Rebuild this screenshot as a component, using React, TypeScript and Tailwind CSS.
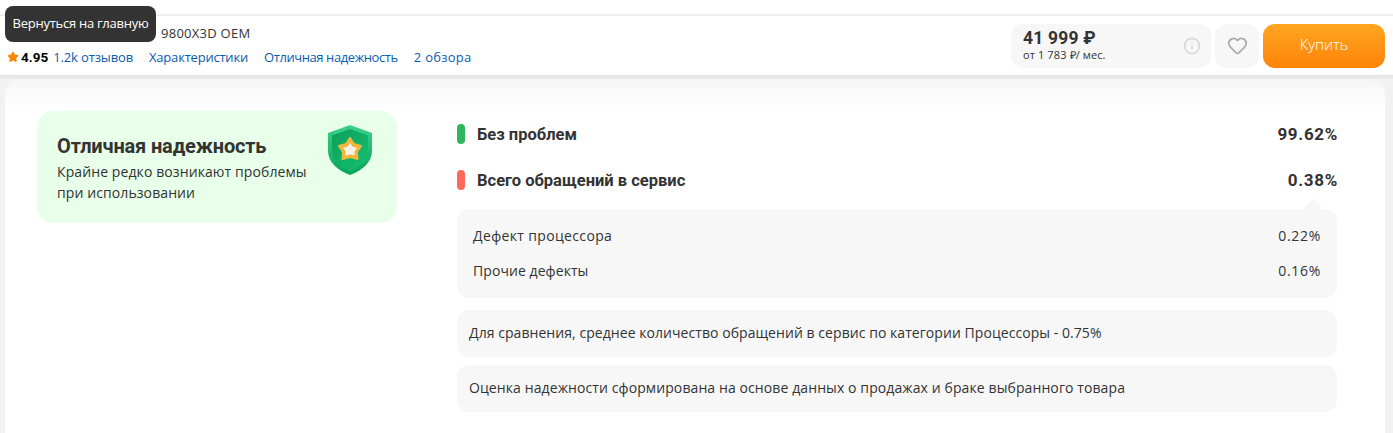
import { Heart, Info, Star } from "lucide-react";

const Shield = () => (
	<svg width="46" height="52" viewBox="0 0 46 52" className="shrink-0">
		<defs>
			<linearGradient id="sh" x1="0" y1="0" x2="0" y2="1">
				<stop offset="0" stopColor="#3fd08a" />
				<stop offset="1" stopColor="#06a35a" />
			</linearGradient>
			<linearGradient id="inner" x1="0" y1="0" x2="1" y2="1">
				<stop offset="0" stopColor="#0c9f5b" />
				<stop offset="1" stopColor="#16c070" />
			</linearGradient>
		</defs>
		<path d="M23 1 L45 9 V27 C45 39 34 47 23 51 C12 47 1 39 1 27 V9 Z" fill="url(#sh)" />
		<path d="M23 5 L41 11.500 V27 C41 37 32 44 23 47.500 C14 44 5 37 5 27 V11.500 Z" fill="url(#inner)" />
		<path d="M23 14 L27 20 L34 22 L30 28 L30.500 35 L23 33 L15.500 35 L16 28 L12 22 L19 20 Z" fill="#eeb73d" stroke="#eeb73d" strokeWidth="2" strokeLinejoin="round" />
		<path d="M23 19 L25.500 22.500 L30 24 L27.500 27.500 L27.500 31.500 L23 30.500 L18.500 31.500 L18.500 27.500 L16 24 L20.500 22.500 Z" fill="#f8f1e4" />
	</svg>
);

const Row = ({ color, label, value }: { color: string; label: string; value: string }) => (
	<div className="flex items-center h-[46px]">
		<span className={`w-2 h-5 rounded-full mr-3 ${color}`} />
		<span className="flex-1 pt-[2px] font-['Roboto',sans-serif] text-[16.5px] font-bold text-[#333]">{label}</span>
		<span className="pt-[2px] -mr-px font-['Roboto',sans-serif] text-[17px] tracking-[0.04em] font-bold text-[#333]">{value}</span>
	</div>
);

const Note = ({ children, tracking }: { children: string; tracking: string }) => (
	<div className={`bg-[#f7f7f7] rounded-xl h-[47px] px-3 pb-[2px] flex items-center text-[14px] text-[#333] ${tracking}`}>{children}</div>
);

export default function App() {
	return (
		<div className="relative h-[433px] overflow-hidden bg-[#f2f2f2] font-['Open_Sans',sans-serif] text-[#333]">
			<div className="h-4 bg-white border-b-2 border-[#eeeeee]" />
			<div className="h-[59px] bg-white flex items-center pl-[6px] pr-[8px]">
				<div className="flex-1 min-w-0 pb-[2px]">
					<div className="pl-[155px] text-[13px] tracking-[0.02em] leading-4 text-[#333]">9800X3D OEM</div>
					<div className="flex items-center mt-[8px] text-[13px] leading-4">
						<Star size={12} className="text-[#fc8507] fill-[#fc8507] ml-px mr-[2px]" />
						<span className="font-['Roboto',sans-serif] text-[13.5px] font-bold text-black mr-[5px]">4.95</span>
						<span className="text-[#0b5cad] tracking-[-0.01em] mr-[16px]">1.2k отзывов</span>
						<span className="text-[#0b5cad] tracking-[-0.016em] mr-[16px]">Характеристики</span>
						<span className="text-[#0b5cad] tracking-[-0.032em] mr-[16px]">Отличная надежность</span>
						<span className="text-[#0b5cad] tracking-[0.02em]">2 обзора</span>
					</div>
				</div>
				<div className="w-[200px] h-11 mr-1 bg-[#f7f7f7] rounded-xl pl-3 pr-[10px] flex items-center">
					<div className="flex-1 -mt-[3px]">
						<div className="font-['Roboto',sans-serif] text-[17.5px] leading-5 font-bold tracking-[0.01em] text-[#333]">41 999 ₽</div>
						<div className="text-[11px] leading-3 text-[#333] tracking-[0.01em] mt-[1px]">от 1 783 ₽/ мес.</div>
					</div>
					<Info size={18} className="text-[#d4d4d4]" />
				</div>
				<div className="w-11 h-11 mr-1 bg-[#f7f7f7] rounded-xl flex items-center justify-center">
					<Heart size={21} className="text-[#aaaaaa]" />
				</div>
				<div className="w-[122px] h-11 pb-[2px] rounded-xl bg-gradient-to-b from-[#ffa51f] to-[#fe8407] flex items-center justify-center font-light text-[15px] text-white">Купить</div>
			</div>
			<div className="h-1 bg-gradient-to-b from-[#e4e4e4] to-[#ececec]" />
			<div className="mx-[5px] mr-2 h-[354px] rounded-t-2xl bg-gradient-to-b from-[#f6f6f6] to-white to-[30px] bg-white flex pl-8 pr-[48px] pt-8">
				<div className="w-[360px] h-28 shrink-0 bg-[#e8ffe9] rounded-2xl pl-5 pr-6 pt-[21px] mr-[60px]">
					<div className="font-['Roboto',sans-serif] text-[20px] tracking-[-0.008em] leading-[28px] font-bold text-[#333]">Отличная надежность</div>
					<div className="text-[14px] leading-[21px] tracking-[0.007em] text-[#333] mt-[1px]">Крайне редко возникают проблемы<br />при использовании</div>
				</div>
				<div className="flex-1 min-w-0">
					<Row color="bg-[#2fb65d]" label="Без проблем" value="99.62%" />
					<Row color="bg-[#ff6a5c]" label="Всего обращений в сервис" value="0.38%" />
					<div className="relative bg-[#f7f7f7] rounded-xl h-[89px] mt-[6px] px-4 pt-[9px] text-[14px] text-[#333]">
						<div className="absolute -top-[7px] right-[16px] w-4 h-4 rotate-45 bg-[#f7f7f7]" />
						<div className="relative flex justify-between h-[35px] items-center"><span className="tracking-[0.025em]">Дефект процессора</span><span className="tracking-[0.05em]">0.22%</span></div>
						<div className="relative flex justify-between h-[35px] items-center"><span className="tracking-[0.005em]">Прочие дефекты</span><span className="tracking-[0.05em]">0.16%</span></div>
					</div>
					<div className="flex flex-col gap-2 mt-3">
						<Note tracking="tracking-[0.004em]">Для сравнения, среднее количество обращений в сервис по категории Процессоры - 0.75%</Note>
						<Note tracking="tracking-[0.007em]">Оценка надежности сформирована на основе данных о продажах и браке выбранного товара</Note>
					</div>
				</div>
			</div>
			<div className="absolute left-[327px] top-[124px]"><Shield /></div>
			<div className="absolute left-[5px] top-[6px] w-[151px] h-[36px] bg-[#333333] rounded-lg flex items-center justify-center text-[13px] tracking-[-0.02em] text-white">Вернуться на главную</div>
		</div>
	);
}
